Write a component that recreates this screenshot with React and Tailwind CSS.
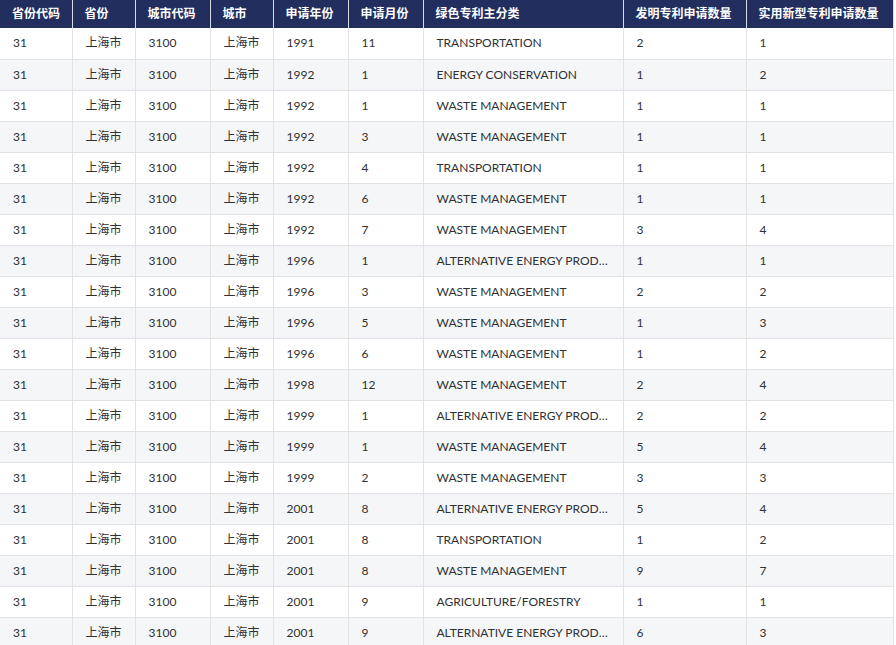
import React from "react";

const columns = [
  { key: "provCode", label: "省份代码", w: "w-[72px]" },
  { key: "prov", label: "省份", w: "w-[63px]" },
  { key: "cityCode", label: "城市代码", w: "w-[75px]" },
  { key: "city", label: "城市", w: "w-[63px]" },
  { key: "year", label: "申请年份", w: "w-[75px]" },
  { key: "month", label: "申请月份", w: "w-[75px]" },
  { key: "category", label: "绿色专利主分类", w: "w-[200px]" },
  { key: "invention", label: "发明专利申请数量", w: "w-[123px]" },
  { key: "utility", label: "实用新型专利申请数量", w: "w-[147px]" },
];

const T = "TRANSPORTATION";
const W = "WASTE MANAGEMENT";
const A = "ALTERNATIVE ENERGY PRODUCTION";

const raw = [
  [1991, 11, T, 2, 1],
  [1992, 1, "ENERGY CONSERVATION", 1, 2],
  [1992, 1, W, 1, 1],
  [1992, 3, W, 1, 1],
  [1992, 4, T, 1, 1],
  [1992, 6, W, 1, 1],
  [1992, 7, W, 3, 4],
  [1996, 1, A, 1, 1],
  [1996, 3, W, 2, 2],
  [1996, 5, W, 1, 3],
  [1996, 6, W, 1, 2],
  [1998, 12, W, 2, 4],
  [1999, 1, A, 2, 2],
  [1999, 1, W, 5, 4],
  [1999, 2, W, 3, 3],
  [2001, 8, A, 5, 4],
  [2001, 8, T, 1, 2],
  [2001, 8, W, 9, 7],
  [2001, 9, "AGRICULTURE/FORESTRY", 1, 1],
  [2001, 9, A, 6, 3],
  [2002, 3, W, 2, 1],
];

const rows = raw.map(([year, month, category, invention, utility]) => ({
  provCode: 31,
  prov: "上海市",
  cityCode: 3100,
  city: "上海市",
  year,
  month,
  category,
  invention,
  utility,
}));

export default function App() {
  return (
    <div className="h-[645px] w-[896px] overflow-hidden bg-white font-['Lato','Noto_Sans_CJK_SC',sans-serif] text-[12px] text-[#303133]">
      <table className="w-[893px] table-fixed border-collapse">
        <thead>
          <tr className="h-[28px] bg-[#212e5e] text-white">
            {columns.map((c) => (
              <th
                key={c.key}
                className={`${c.w} border-r border-[#d7dbe6] px-[12px] text-left font-bold whitespace-nowrap`}
              >
                {c.label}
              </th>
            ))}
          </tr>
        </thead>
        <tbody>
          {rows.map((r, i) => (
            <tr key={i} className={`h-[31px] border-b border-[#e1e3e8] ${i % 2 ? "bg-[#f5f6f8]" : "bg-white"}`}>
              {columns.map((c) => (
                <td
                  key={c.key}
                  className="truncate border-r border-[#e1e3e8] px-[13px] whitespace-nowrap"
                >
                  {r[c.key]}
                </td>
              ))}
            </tr>
          ))}
        </tbody>
      </table>
    </div>
  );
}
